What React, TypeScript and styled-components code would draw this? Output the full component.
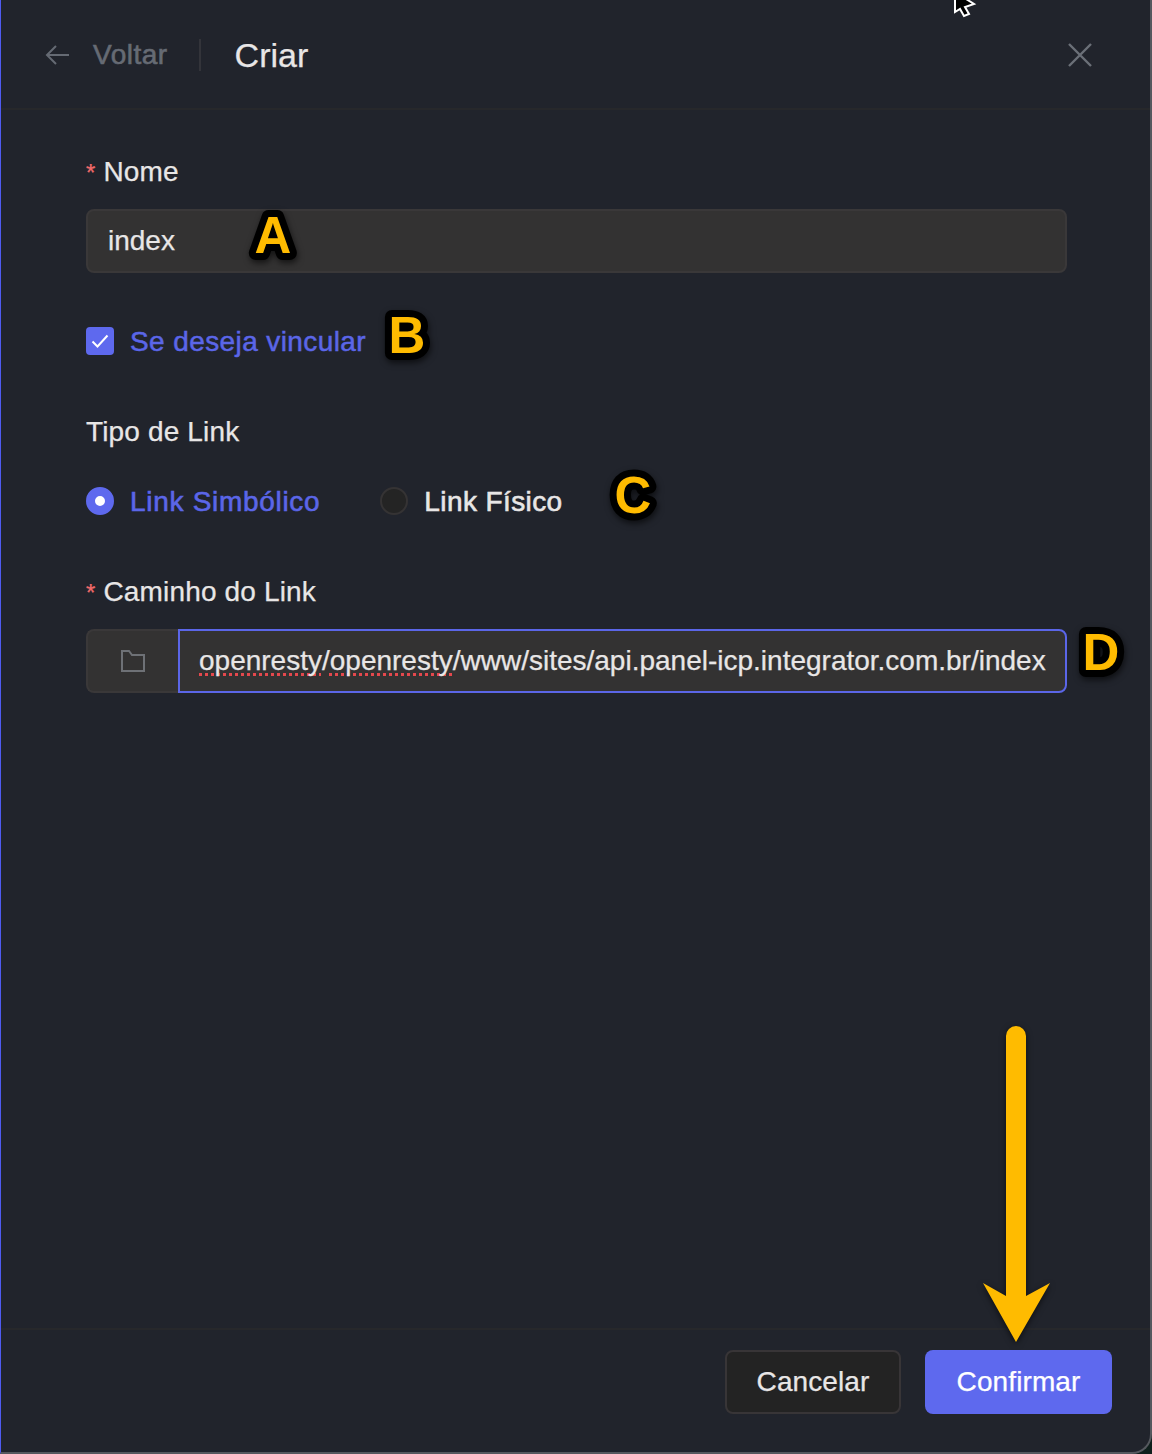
import styled, { createGlobalStyle } from "styled-components";

const GlobalStyle = createGlobalStyle`
  html, body {
    margin: 0;
    padding: 0;
    background: #0f1f1c;
  }
  * {
    box-sizing: border-box;
  }
`;

const BLUE = "#5b66e8";

const Marker = ({ x, y, children }: { x: number; y: number; children: string }) => (
  <MarkerBox width="80" height="80" viewBox="0 0 80 80" $x={x - 40} $y={y - 60}>
    <MarkerText x="40" y="60" textAnchor="middle">
      {children}
    </MarkerText>
  </MarkerBox>
);

const App = () => {
  return (
    <>
      <GlobalStyle />
      <Drawer>
        <Header>
          <BackLink>
            <svg width="26" height="22" viewBox="0 0 26 22" fill="none" stroke="#656a73" strokeWidth="2">
              <path d="M24 11H2M11 2l-9 9 9 9" />
            </svg>
            <BackText>Voltar</BackText>
          </BackLink>
          <HeaderDivider />
          <Title>Criar</Title>
          <CloseButton>
            <svg width="24" height="24" viewBox="0 0 24 24" stroke="#6b7078" strokeWidth="2.4">
              <path d="M1 1l22 22M23 1L1 23" />
            </svg>
          </CloseButton>
        </Header>

        <Body>
          <Label>
            <Asterisk>*</Asterisk>
            Nome
          </Label>
          <TextField>index</TextField>

          <CheckRow>
            <CheckBox>
              <svg width="18" height="14" viewBox="0 0 18 14" fill="none" stroke="#fff" strokeWidth="2">
                <path d="M1.5 7.5l5 5 10-11" />
              </svg>
            </CheckBox>
            <CheckText>Se deseja vincular</CheckText>
          </CheckRow>

          <PlainLabel>Tipo de Link</PlainLabel>
          <RadioRow>
            <RadioOption>
              <Radio $checked />
              <RadioText $active>Link Simbólico</RadioText>
            </RadioOption>
            <RadioOption>
              <Radio />
              <RadioText>Link Físico</RadioText>
            </RadioOption>
          </RadioRow>

          <Label>
            <Asterisk>*</Asterisk>
            Caminho do Link
          </Label>
          <PathField>
            <PathAddon>
              <svg width="24" height="22" viewBox="0 0 24 22" fill="none" stroke="#6e7176" strokeWidth="2">
                <path d="M1 21V1h7l3 4h12v16z" />
              </svg>
            </PathAddon>
            <PathInput>
              <Misspelled>openresty</Misspelled>/<Misspelled>openresty</Misspelled>
              /www/sites/api.panel-icp.integrator.com.br/index
            </PathInput>
          </PathField>
        </Body>

        <Footer>
          <CancelButton>Cancelar</CancelButton>
          <ConfirmButton>Confirmar</ConfirmButton>
        </Footer>

        <Cursor width="26" height="20" viewBox="0 0 26 20">
          <path d="M3 -8V12l5-3 4 7 5-2-4-7 9-3z" fill="#000" stroke="#fff" strokeWidth="2" />
        </Cursor>

        <Marker x={272} y={253}>A</Marker>
        <Marker x={406} y={353}>B</Marker>
        <Marker x={632} y={513}>C</Marker>
        <Marker x={1100} y={670}>D</Marker>

        <Arrow width="70" height="320" viewBox="0 0 70 320">
          <path d="M26 10a10 10 0 0 1 20 0V270l24-13-34 59L3 257l23 13z" fill="#ffbb00" />
        </Arrow>
      </Drawer>
    </>
  );
};

const Drawer = styled.div`
  position: relative;
  width: 1152px;
  height: 1454px;
  display: flex;
  flex-direction: column;
  overflow: hidden;
  background: #21242c;
  border-left: 1px solid #4f5bf0;
  border-bottom: 2px solid #55585e;
  border-right: 2px solid #55585e;
  border-bottom-right-radius: 20px;
  font-family: "Liberation Sans", Arial, sans-serif;
  font-size: 28px;
  color: #e8e6e6;
  -webkit-text-stroke: 0.25px currentColor;
`;

const Header = styled.header`
  height: 110px;
  flex: none;
  display: flex;
  align-items: center;
  padding: 2px 58px 0 44px;
  border-bottom: 2px solid #27282b;
`;

const BackLink = styled.div`
  display: flex;
  align-items: center;
  gap: 22px;
`;

const BackText = styled.span`
  color: #666b74;
  letter-spacing: 0.5px;
  -webkit-text-stroke: 0.6px #666b74;
`;

const HeaderDivider = styled.div`
  width: 2px;
  height: 32px;
  margin: 0 34px 0 31px;
  background: #33343a;
`;

const Title = styled.h1`
  flex: 1;
  margin: 0;
  font-size: 34px;
  font-weight: 400;
  color: #e8e6e6;
`;

const CloseButton = styled.div`
  display: flex;
`;

const Body = styled.main`
  flex: 1;
  display: flex;
  flex-direction: column;
  align-items: flex-start;
  padding: 45px 83px 0 85px;
`;

const Label = styled.label`
  height: 32px;
  line-height: 34px;
  margin-bottom: 22px;
  letter-spacing: 0.15px;
`;

const PlainLabel = styled(Label)`
  margin-bottom: 40px;
`;

const Asterisk = styled.span`
  margin-right: 8px;
  font-size: 24px;
  color: #f06a6a;
`;

const TextField = styled.div`
  width: 100%;
  height: 64px;
  padding: 0 20px;
  display: flex;
  align-items: center;
  background: #333232;
  border: 2px solid #3a3839;
  border-radius: 8px;
`;

const CheckRow = styled.div`
  display: flex;
  align-items: center;
  gap: 16px;
  margin: 54px 0 60px;
  height: 28px;
`;

const CheckBox = styled.div`
  width: 28px;
  height: 28px;
  display: flex;
  align-items: center;
  justify-content: center;
  background: #5e69ee;
  border-radius: 4px;
`;

const CheckText = styled.span`
  padding-top: 2px;
  color: ${BLUE};
  letter-spacing: 0.4px;
  -webkit-text-stroke: 0.5px ${BLUE};
`;

const RadioRow = styled.div`
  display: flex;
  align-items: center;
  gap: 60px;
  height: 28px;
  margin-bottom: 60px;
`;

const RadioOption = styled.div`
  display: flex;
  align-items: center;
  gap: 16px;
`;

const Radio = styled.span<{ $checked?: boolean }>`
  width: 28px;
  height: 28px;
  flex: none;
  border-radius: 50%;
  background: ${(p) => (p.$checked ? "#fff" : "#242424")};
  border: ${(p) => (p.$checked ? "9px solid #5e69ee" : "2px solid #353334")};
`;

const RadioText = styled.span<{ $active?: boolean }>`
  padding-top: 2px;
  color: ${(p) => (p.$active ? BLUE : "#e8e6e6")};
  letter-spacing: ${(p) => (p.$active ? "0.7px" : "0.4px")};
  -webkit-text-stroke: 0.6px ${(p) => (p.$active ? BLUE : "#e8e6e6")};
`;

const PathField = styled.div`
  width: 100%;
  height: 64px;
  display: flex;
`;

const PathAddon = styled.div`
  width: 92px;
  flex: none;
  display: flex;
  align-items: center;
  justify-content: center;
  background: #333232;
  border: 2px solid #3a3839;
  border-right: 0;
  border-radius: 8px 0 0 8px;
`;

const PathInput = styled.div`
  flex: 1;
  display: flex;
  align-items: center;
  padding-left: 19px;
  white-space: pre;
  overflow: hidden;
  background: #333232;
  border: 2px solid ${BLUE};
  border-radius: 0 8px 8px 0;
`;

const Misspelled = styled.span`
  text-decoration: underline dotted #e5484d 3px;
  text-decoration-skip-ink: none;
  text-underline-offset: 3px;
`;

const Footer = styled.footer`
  height: 124px;
  flex: none;
  display: flex;
  justify-content: flex-end;
  align-items: flex-start;
  gap: 24px;
  padding: 20px 38px 0 0;
  border-top: 2px solid #27282b;
`;

const CancelButton = styled.button`
  width: 176px;
  height: 64px;
  font: inherit;
  letter-spacing: 0.1px;
  color: #e8e6e6;
  background: #232323;
  border: 2px solid #383537;
  border-radius: 8px;
`;

const ConfirmButton = styled.button`
  width: 187px;
  height: 64px;
  font: inherit;
  letter-spacing: 0.1px;
  color: #fff;
  background: #5e69ee;
  border: 0;
  border-radius: 8px;
`;

const Cursor = styled.svg`
  position: absolute;
  left: 951px;
  top: 0;
`;

const MarkerBox = styled.svg<{ $x: number; $y: number }>`
  position: absolute;
  left: ${(p) => p.$x}px;
  top: ${(p) => p.$y}px;
  overflow: visible;
  filter: drop-shadow(1px 3px 3px rgba(0, 0, 0, 0.6));
`;

const MarkerText = styled.text`
  font-family: "Liberation Sans", Arial, sans-serif;
  font-size: 51px;
  font-weight: 700;
  fill: #ffbb00;
  stroke: #000;
  stroke-width: 14px;
  stroke-linejoin: round;
  paint-order: stroke fill;
`;

const Arrow = styled.svg`
  position: absolute;
  left: 979px;
  top: 1026px;
  overflow: visible;
  filter: drop-shadow(0 2px 3px rgba(0, 0, 0, 0.6));
`;

export default App;
